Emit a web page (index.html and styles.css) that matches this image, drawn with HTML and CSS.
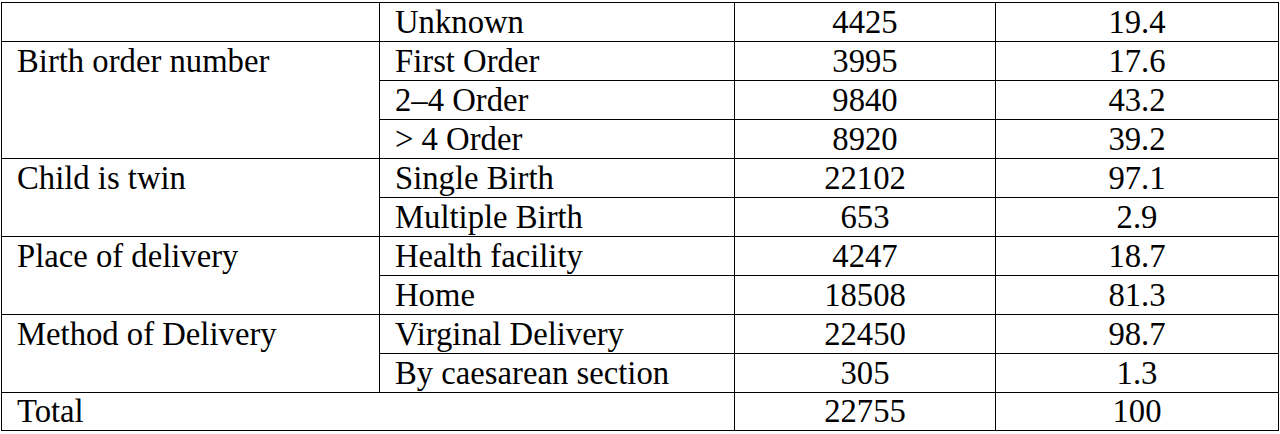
FILE: index.html
```html
<!DOCTYPE html>
<html>
<head>
<meta charset="utf-8">
<link rel="stylesheet" href="styles.css">
</head>
<body>
<table class="data">
  <colgroup>
    <col class="c-var">
    <col class="c-cat">
    <col class="c-num">
    <col class="c-pct">
  </colgroup>
  <tbody>
    <tr>
      <td></td>
      <td>Unknown</td>
      <td class="num">4425</td>
      <td class="num">19.4</td>
    </tr>
    <tr>
      <td rowspan="3" class="group">Birth order number</td>
      <td>First Order</td>
      <td class="num">3995</td>
      <td class="num">17.6</td>
    </tr>
    <tr>
      <td>2–4 Order</td>
      <td class="num">9840</td>
      <td class="num">43.2</td>
    </tr>
    <tr>
      <td>&gt; 4 Order</td>
      <td class="num">8920</td>
      <td class="num">39.2</td>
    </tr>
    <tr>
      <td rowspan="2" class="group">Child is twin</td>
      <td>Single Birth</td>
      <td class="num">22102</td>
      <td class="num">97.1</td>
    </tr>
    <tr>
      <td>Multiple Birth</td>
      <td class="num">653</td>
      <td class="num">2.9</td>
    </tr>
    <tr>
      <td rowspan="2" class="group">Place of delivery</td>
      <td>Health facility</td>
      <td class="num">4247</td>
      <td class="num">18.7</td>
    </tr>
    <tr>
      <td>Home</td>
      <td class="num">18508</td>
      <td class="num">81.3</td>
    </tr>
    <tr>
      <td rowspan="2" class="group">Method of Delivery</td>
      <td>Virginal Delivery</td>
      <td class="num">22450</td>
      <td class="num">98.7</td>
    </tr>
    <tr>
      <td>By caesarean section</td>
      <td class="num">305</td>
      <td class="num">1.3</td>
    </tr>
    <tr class="total">
      <td colspan="2">Total</td>
      <td class="num">22755</td>
      <td class="num">100</td>
    </tr>
  </tbody>
</table>
</body>
</html>
```

FILE: styles.css
```css
html, body {
  margin: 0;
  padding: 0;
  background: #ffffff;
}

.data {
  margin: 2px 0 0 1px;
  width: 1277px;
  table-layout: fixed;
  border-collapse: collapse;
  font-family: "Liberation Serif", "Times New Roman", serif;
  font-size: 32.7px;
  color: #000000;
}

.c-var { width: 378px; }
.c-cat { width: 355px; }
.c-num { width: 261px; }
.c-pct { width: 283px; }

.data td {
  border: 1px solid #000000;
  padding: 0 0 0 15px;
  line-height: 38px;
  vertical-align: top;
  white-space: nowrap;
}

.data td.num {
  text-align: center;
  padding: 0;
}

.data tr.total td {
  line-height: 37px;
}
```
